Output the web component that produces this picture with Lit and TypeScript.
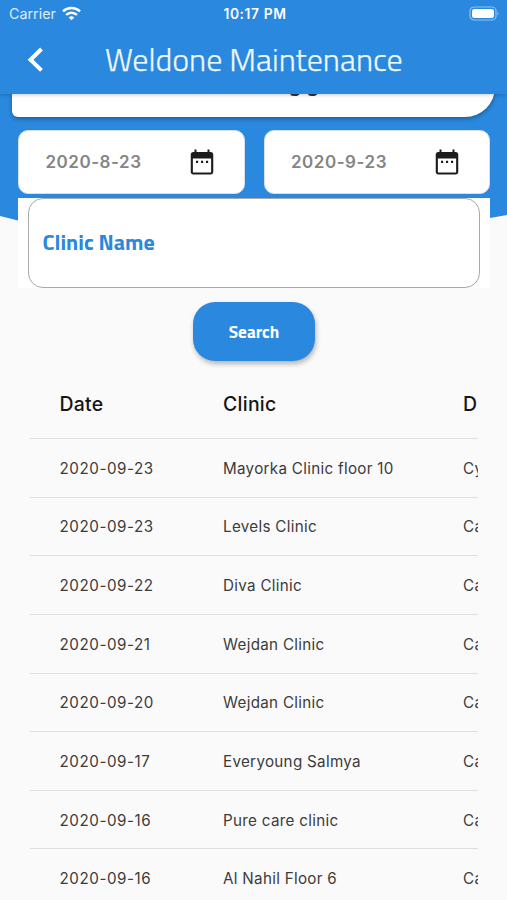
import { LitElement, html, css, svg } from "lit";
import { customElement } from "lit/decorators.js";

const rows: [string, string, string][] = [
  ["2020-09-23", "Mayorka Clinic floor 10", "Cy"],
  ["2020-09-23", "Levels Clinic", "Ca"],
  ["2020-09-22", "Diva Clinic", "Ca"],
  ["2020-09-21", "Wejdan Clinic", "Ca"],
  ["2020-09-20", "Wejdan Clinic", "Ca"],
  ["2020-09-17", "Everyoung Salmya", "Ca"],
  ["2020-09-16", "Pure care clinic", "Ca"],
  ["2020-09-16", "Al Nahil Floor 6", "Ca"],
];

const calendarIcon = html`<svg class="cal" width="30" height="30" viewBox="0 0 24 24" fill="currentColor">
  ${svg`<path d="M7.2 11h1.7v1.7H7.2zm4 0h1.7v1.7h-1.7zm4 0h1.7v1.7h-1.7z"/>
  <path fill-rule="evenodd" d="M19 4h-1V2h-1.6v2H7.6V2H6v2H5c-1.11 0-1.99.9-1.99 2L3 20c0 1.1.89 2 2 2h14c1.1 0 2-.9 2-2V6c0-1.1-.9-2-2-2zm.3 16.300H4.700V9.200h14.600z"/>`}
</svg>`;

@customElement("app-root")
export class AppRoot extends LitElement {
  static styles = css`
    :host {
      display: block;
      position: relative;
      width: 507px;
      height: 900px;
      overflow: hidden;
      background: #fafafa;
      font-family: Inter, "Liberation Sans", sans-serif;
    }
    * { box-sizing: border-box; }
    .wave {
      position: absolute;
      inset: 0 0 auto 0;
      height: 240px;
      background: #2a88de;
      clip-path: polygon(0 0, 100% 0, 100% 215px, 490px 218px, 400px 236px, 100px 238px, 18px 220.5px, 0 216px);
    }
    header {
      position: relative;
      z-index: 2;
      height: 94px;
      background: #2a88de;
      color: #fff;
      box-shadow: 0 1px 4px rgba(0, 0, 0, 0.2);
    }
    .status {
      display: grid;
      grid-template-columns: 1fr auto 1fr;
      align-items: center;
      height: 27px;
      padding: 0 7px 0 9px;
    }
    .carrier { display: flex; align-items: center; gap: 6px; font-size: 14.3px; color: #dcecfb; }
    .time { font-size: 13.8px; font-weight: 600; letter-spacing: 0.6px; margin-right: -1px; }
    .battery { justify-self: end; }
    .bar { display: flex; align-items: center; height: 67px; padding-left: 26px; }
    .title {
      margin: 0 0 3px 59px;
      font: 300 32px/48px "Titillium Web", "Noto Sans", sans-serif;
      white-space: nowrap;
      color: #eef8ff;
      -webkit-text-stroke: 0.25px #eef8ff;
    }
    .content { position: relative; }
    .card {
      width: 483px;
      height: 40px;
      margin: -17px 0 0 12px;
      background: #fff;
      border-radius: 0 0 30px 6px;
      box-shadow: 0 2px 4px rgba(0, 0, 0, 0.3);
      font: 700 20px/14px "Noto Sans", sans-serif;
      color: #263340;
      padding-left: 277px;
      white-space: pre;
    }
    .dates { display: flex; gap: 19px; margin: 13px 17px 0 18px; }
    .date {
      flex: 1;
      display: flex;
      align-items: center;
      justify-content: space-between;
      height: 64px;
      padding: 0 27px 0 26.5px;
      border-radius: 10px;
      background: #fff;
      border: 1px solid #d5e0ea;
      font-size: 17px;
      font-weight: 600;
      letter-spacing: 0.52px;
      color: #858585;
    }
    .cal { color: #1c1c1e; }
    .field { margin: 4px 17px 0 18px; padding: 0 10px; height: 90px; background: #fff; }
    .input {
      display: flex;
      align-items: center;
      height: 90px;
      padding: 0 0 2px 13.5px;
      border: 1.3px solid #a9a9a9;
      border-radius: 15px;
      font: 700 22px/30px "Titillium Web", "Noto Sans", sans-serif;
      color: #2a88de;
    }
    .search {
      display: flex;
      align-items: center;
      justify-content: center;
      width: 122px;
      height: 59px;
      margin: 14px 0 0 193px;
      border: 0;
      border-radius: 22px;
      background: #2a88de;
      box-shadow: 1px 3px 5px rgba(0, 0, 0, 0.28);
      color: #fff;
      font: 700 17.2px/24px "Titillium Web", "Noto Sans", sans-serif;
    }
    .table { width: 448px; margin: 9px 0 0 30px; overflow: hidden; color: #3c3c3c; }
    .row {
      display: grid;
      grid-template-columns: 163.5px 240px 120px;
      align-items: center;
      height: 58.65px;
      padding: 1px 0 0 29.5px;
      border-bottom: 1.2px solid #dedede;
      font-size: 15.2px;
      letter-spacing: 0.3px;
      white-space: nowrap;
    }
    .row:not(.head) span:first-child { letter-spacing: 0.55px; }
    .head { height: 69px; padding-top: 0; font-size: 19.4px; font-weight: 500; color: #151515; }
  `;

  render() {
    return html`
      <div class="wave"></div>
      <header>
        <div class="status">
          <div class="carrier">
            <span>Carrier</span>
            <svg width="19" height="15" viewBox="0 0 19 15" fill="none" stroke="#fff" stroke-width="2.5">
              <path d="M1 5.400a12.400 12.400 0 0 1 17 0" /><path d="M4.100 8.800a7.800 7.800 0 0 1 10.800 0" />
              <path d="M9.500 14.200 6.700 11.400a4.200 4.200 0 0 1 5.600 0z" fill="#fff" stroke="none" />
            </svg>
          </div>
          <span class="time">10:17 PM</span>
          <svg class="battery" width="31" height="15" viewBox="0 0 31 15">
            <rect x="1" y="1" width="26" height="13" rx="4" fill="none" stroke="#8fc1ef" stroke-width="1.2" />
            <rect x="3" y="3" width="22" height="9" rx="2.2" fill="#fff" />
            <path d="M28.500 5.200q2 2.300 0 4.600z" fill="#8fc1ef" />
          </svg>
        </div>
        <div class="bar">
          <svg width="20" height="28" viewBox="0 0 20 28" fill="none" stroke="#fff" stroke-width="4">
            <path d="M15.500 2 4.500 12.700l11 10.700" />
          </svg>
          <div class="title">Weldone Maintenance</div>
        </div>
      </header>
      <div class="content">
        <div class="card">g g</div>
        <div class="dates">
          <div class="date"><span>2020-8-23</span>${calendarIcon}</div>
          <div class="date"><span>2020-9-23</span>${calendarIcon}</div>
        </div>
        <div class="field"><div class="input"><span>Clinic Name</span></div></div>
        <button class="search"><span>Search</span></button>
        <div class="table">
          <div class="row head"><span>Date</span><span>Clinic</span><span>D</span></div>
          ${rows.map((r) => html`<div class="row">${r.map((c) => html`<span>${c}</span>`)}</div>`)}
        </div>
      </div>
    `;
  }
}
